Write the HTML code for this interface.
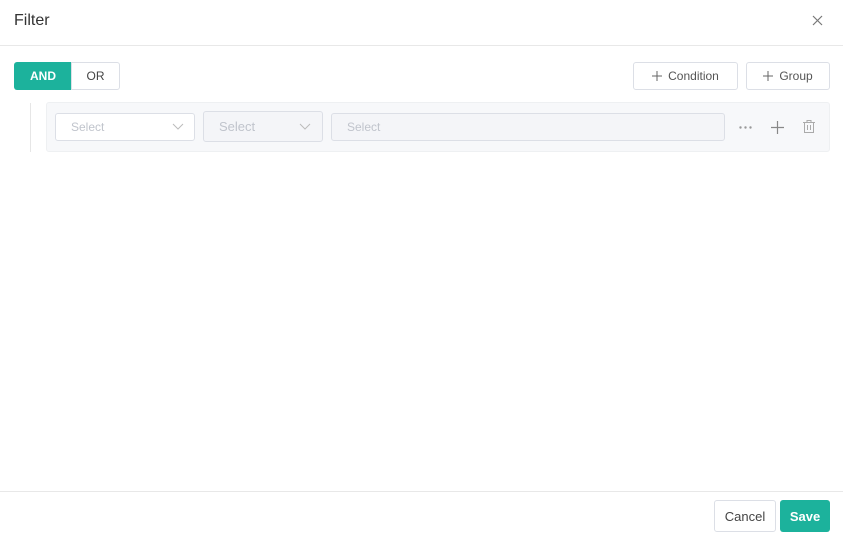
<!DOCTYPE html>
<html><head><style>
*{box-sizing:border-box;margin:0;padding:0}
body{width:843px;height:537px;background:#fff;font-family:"Liberation Sans",sans-serif;position:relative;overflow:hidden;color:#333}
.abs{position:absolute}
.btn{position:absolute;border:1px solid #dcdfe6;border-radius:3px;background:#fff;font-size:12px;color:#555;display:flex;align-items:center;justify-content:center}
.sel{position:absolute;border:1px solid #dcdfe6;border-radius:3px;font-size:12px;color:#c0c4cc;display:flex;align-items:center;padding-left:15px}
.pl{margin-right:6px}
</style></head><body>
<div class="abs" style="left:14px;top:12px;font-size:16px;color:#333">Filter</div>
<svg class="abs" style="left:812px;top:15px" width="11" height="11"><path d="M1 1L10 10M10 1L1 10" stroke="#777" stroke-width="1.2"/></svg>
<div class="abs" style="left:0;top:45px;width:843px;height:1px;background:#e8e8e8"></div>

<div class="abs" style="left:14px;top:62px;width:58px;height:28px;background:#1cb29c;border-radius:3px 0 0 3px;color:#fff;font-weight:bold;font-size:12px;display:flex;align-items:center;justify-content:center">AND</div>
<div class="btn" style="left:71px;top:62px;width:49px;height:28px;border-radius:0 3px 3px 0;color:#444">OR</div>

<div class="btn" style="left:633px;top:62px;width:105px;height:28px"><svg class="pl" width="10" height="10"><path d="M5 0V10M0 5H10" stroke="#666"/></svg>Condition</div>
<div class="btn" style="left:746px;top:62px;width:84px;height:28px"><svg class="pl" width="10" height="10"><path d="M5 0V10M0 5H10" stroke="#666"/></svg>Group</div>

<div class="abs" style="left:30px;top:103px;width:1px;height:49px;background:#e6e6e6"></div>
<div class="abs" style="left:46px;top:102px;width:784px;height:50px;background:#f7f8fa;border:1px solid #eef0f2;border-radius:3px"></div>
<div class="sel" style="left:55px;top:113px;width:140px;height:28px;background:#fff">Select</div>
<svg class="abs" style="left:172px;top:123px" width="12" height="7"><path d="M1 1L6 6L11 1" stroke="#bbb" fill="none"/></svg>
<div class="sel" style="left:203px;top:111px;width:120px;height:31px;background:#f4f5f8;font-size:13px">Select</div>
<svg class="abs" style="left:299px;top:123px" width="12" height="7"><path d="M1 1L6 6L11 1" stroke="#bbb" fill="none"/></svg>
<div class="sel" style="left:331px;top:113px;width:394px;height:28px;background:#f4f5f8">Select</div>
<svg class="abs" style="left:739px;top:126px" width="13" height="3"><circle cx="1.5" cy="1.5" r="1.2" fill="#999"/><circle cx="6.5" cy="1.5" r="1.2" fill="#999"/><circle cx="11.5" cy="1.5" r="1.2" fill="#999"/></svg>
<svg class="abs" style="left:771px;top:121px" width="13" height="13"><path d="M6.5 0V13M0 6.5H13" stroke="#888" stroke-width="1.2"/></svg>
<svg class="abs" style="left:803px;top:120px" width="12" height="13"><path d="M0 2.5H12M4 2.5V0.5H8V2.5M1.5 2.5V12.5H10.5V2.5M4.5 5V10M7.5 5V10" stroke="#aaa" fill="none"/></svg>

<div class="abs" style="left:0;top:491px;width:843px;height:1px;background:#e8e8e8"></div>
<div class="btn" style="left:714px;top:500px;width:62px;height:32px;font-size:13px;color:#444">Cancel</div>
<div class="abs" style="left:780px;top:500px;width:50px;height:32px;background:#1cb29c;border-radius:3px;color:#fff;font-weight:bold;font-size:13px;display:flex;align-items:center;justify-content:center">Save</div>
</body></html>
